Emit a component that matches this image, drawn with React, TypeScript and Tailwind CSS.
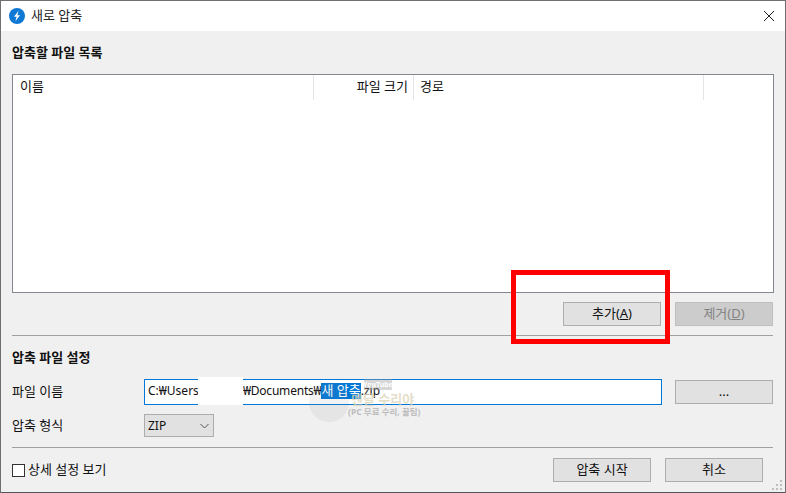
import React from "react";

function Btn({ children, className = "" }: { children: React.ReactNode; className?: string }) {
  return (
    <div className={"flex items-center justify-center w-[98px] h-[24px] pb-[1px] border border-[#adadad] bg-[#e1e1e1] text-[13px] text-[#111] " + className}>
      {children}
    </div>
  );
}

export default function App() {
  return (
    <div className="relative w-[786px] h-[493px] overflow-hidden bg-[#f0f0f0] border-t border-l border-r border-[#6f6f6f] font-['Noto_Sans','Noto_Sans_CJK_KR','Liberation_Sans',sans-serif] text-[13px] leading-none text-[#111]">
      <div className="flex items-center h-[30px] bg-white pl-[8px] pr-[14px]">
        <svg width="16" height="16" viewBox="0 0 16 16" className="shrink-0">
          <circle cx="8" cy="8" r="8" fill="#0f78d4" />
          <path d="M9.6 2.8 5 8.8h2.6L6.4 13.2 11 7.2H8.4z" fill="#fff" />
        </svg>
        <span className="ml-[6px] pb-[1px] text-[13px] text-[#222]">새로 압축</span>
        <svg width="12" height="12" viewBox="0 0 12 12" className="ml-auto mr-[-4px]">
          <path d="M1 1l10 10M11 1 1 11" stroke="#222" strokeWidth="1" fill="none" />
        </svg>
      </div>

      <div className="pl-[11px] pr-[11px] w-[773px]">
        <div className="h-[43px] flex items-center pb-[1px] font-bold text-[13px]">압축할 파일 목록</div>
        <div className="h-[219px] w-[762px] border border-[#828790] bg-white">
          <div className="flex h-[25px] items-stretch">
            <div className="w-[301px] pl-[7px] pt-[5px] border-r border-[#e5e5e5]">이름</div>
            <div className="w-[100px] pr-[5px] pt-[5px] text-right border-r border-[#e5e5e5]">파일 크기</div>
            <div className="w-[290px] pl-[6px] pt-[5px] border-r border-[#e5e5e5]">경로</div>
          </div>
        </div>
        <div className="flex justify-end gap-[14px] mt-[9px] w-[761px]">
          <Btn><span>추가(<u>A</u>)</span></Btn>
          <Btn className="!bg-[#cccccc] !border-[#bfbfbf] !text-[#838383]"><span>제거(<u>D</u>)</span></Btn>
        </div>
        <div className="mt-[9px] w-[761px] border-t border-[#a0a0a0]" />
        <div className="h-[43px] flex items-center font-bold text-[13px]">압축 파일 설정</div>

        <div className="flex items-center h-[26px] w-[761px]">
          <div className="w-[132px] pb-[2px]">파일 이름</div>
          <div className="flex items-center w-[518px] h-[26px] border border-[#0078d7] bg-white pl-[3px] pb-[3px] text-[12px]">
            <span className="whitespace-pre">C:₩Users₩</span>
            <span className="w-[36px] shrink-0" />
            <span className="whitespace-pre tracking-[-0.2px]">₩Documents₩</span>
            <span className="bg-[#0078d7] text-white text-[13px] h-[16px] flex items-center whitespace-pre">새 압축</span>
            <span>.zip</span>
          </div>
          <Btn className="ml-[13px]">...</Btn>
        </div>

        <div className="flex items-center h-[23px] mt-[9px]">
          <div className="w-[132px] pb-[1px]">압축 형식</div>
          <div className="flex items-center justify-between w-[70px] h-[23px] border border-[#adadad] bg-[#e1e1e1] pl-[3px] pr-[4px] text-[12px]">
            <span>ZIP</span>
            <svg width="9" height="6" viewBox="0 0 9 6"><path d="M.5 1l4 4 4-4" stroke="#555" strokeWidth="1" fill="none" /></svg>
          </div>
        </div>

        <div className="mt-[10px] w-[761px] border-t border-[#a0a0a0]" />

        <div className="flex items-center mt-[10px] w-[751px]">
          <div className="w-[13px] h-[13px] border border-[#333] bg-white" />
          <span className="ml-[3px] pb-[1px]">상세 설정 보기</span>
          <div className="ml-auto flex gap-[14px]">
            <Btn>압축 시작</Btn>
            <Btn>취소</Btn>
          </div>
        </div>
      </div>

      <div className="absolute left-[197px] top-[376px] w-[45px] h-[28px] bg-white" />
      <div className="absolute left-[510px] top-[269px] w-[159px] h-[74px] border-[5px] border-[#ff0000]" />

      <div className="absolute left-[308px] top-[381px] w-[40px] h-[40px] rounded-full bg-[#8a8a8a]/10" />
      <div className="absolute left-[363px] top-[378px] w-[28px] h-[11px] bg-[#9a9a9a]/40 text-[7px] font-bold text-white flex items-center justify-center">YouTube</div>
      <div className="absolute left-[350px] top-[392px] text-[13px] font-bold text-[#dcd5b8]/80">멘달 수리야</div>
      <div className="absolute left-[347px] top-[407px] text-[8.5px] font-bold text-[#bdbdbd]">(PC 무료 수리, 꿀팁)</div>

      <svg width="12" height="12" viewBox="0 0 12 12" className="absolute left-[771px] top-[479px]">
        <path d="M8 0h2v2H8zM4 4h2v2H4zM8 4h2v2H8zM0 8h2v2H0zM4 8h2v2H4zM8 8h2v2H8z" fill="#bdbdbd" />
      </svg>
      <div className="absolute left-[-1px] bottom-0 w-[786px] h-[1px] bg-[#555]" />
    </div>
  );
}
